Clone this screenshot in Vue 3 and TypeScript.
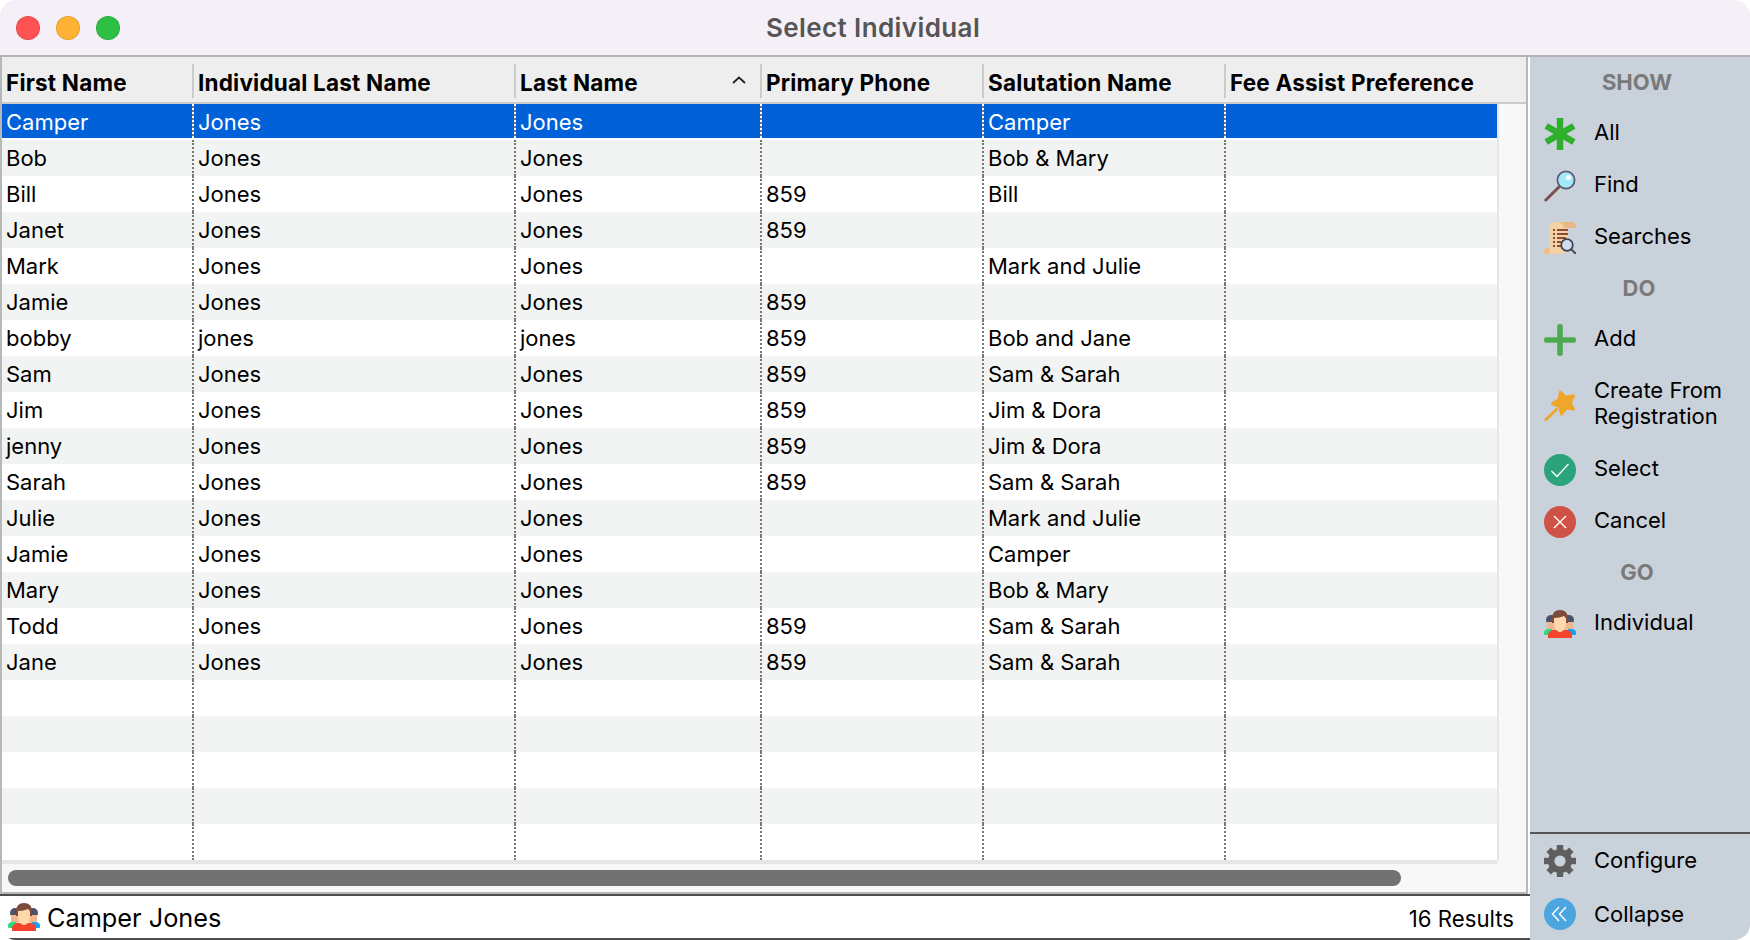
<template>
  <div class="window">
    <!-- icon sprite -->
    <svg class="sprite" aria-hidden="true">
      <symbol id="i-all" viewBox="0 0 32 32">
        <g fill="#2fb02c">
          <rect x="12.8" y="0" width="6.4" height="32" />
          <rect x="12.8" y="0" width="6.4" height="32" transform="rotate(60 16 16)" />
          <rect x="12.8" y="0" width="6.4" height="32" transform="rotate(120 16 16)" />
        </g>
      </symbol>
      <symbol id="i-find" viewBox="0 0 32 32">
        <line x1="1.8" y1="30" x2="15" y2="17" stroke="#7b4f4c" stroke-width="3" stroke-linecap="round" />
        <circle cx="22" cy="10" r="8.6" fill="#a4e8fb" stroke="#5a5a6c" stroke-width="1.8" />
        <circle cx="24.5" cy="7.5" r="2.6" fill="#f2fcff" />
      </symbol>
      <symbol id="i-searches" viewBox="0 0 32 32">
        <path d="M6 3c0-2 2-3 4-3h18c2 0 4 2 4 6H24v18c0 4-2 8-6 8H2c-1 0-2-1-2-2 0-2 1-4 3-4h3z" fill="#f5d1a6" />
        <path d="M12 0h16c2 0 4 2 4 6H20c0-3-3-6-8-6z" fill="#e9b780" />
        <path d="M0 30c0-2 1-4 3-4h3v2c0 2-1 4-3 4H2c-1 0-2-1-2-2z" fill="#eebd88" />
        <g stroke="#8d4c34" stroke-width="1.8">
          <line x1="9" y1="8" x2="11" y2="8" />
          <line x1="13" y1="8" x2="24" y2="8" />
          <line x1="9" y1="12" x2="11" y2="12" />
          <line x1="13" y1="12" x2="24" y2="12" />
          <line x1="9" y1="16" x2="11" y2="16" />
          <line x1="13" y1="16" x2="22" y2="16" />
          <line x1="9" y1="20" x2="11" y2="20" />
          <line x1="13" y1="20" x2="17" y2="20" />
          <line x1="9" y1="24" x2="11" y2="24" />
          <line x1="13" y1="24" x2="17" y2="24" />
        </g>
        <line x1="27" y1="27" x2="31.5" y2="31.5" stroke="#4a4a55" stroke-width="2" stroke-linecap="round" />
        <circle cx="23" cy="23" r="5.8" fill="#cfdcee" stroke="#3f4450" stroke-width="1.8" />
      </symbol>
      <symbol id="i-add" viewBox="0 0 32 32">
        <g fill="#4caa50">
          <rect x="13.2" y="0" width="5.6" height="32" rx="2.4" />
          <rect x="0" y="13.2" width="32" height="5.6" rx="2.4" />
        </g>
      </symbol>
      <symbol id="i-create" viewBox="0 0 32 32">
        <line x1="2" y1="30.5" x2="12.5" y2="20.5" stroke="#eea72a" stroke-width="3" stroke-linecap="round" />
        <path d="M16.5 3L21 8l8.500-1-3.500 7 3.500 6-7.500-1-4.500 6-2-7.500-7-3 6.500-4z" fill="#eea72a" stroke="#eea72a" stroke-width="3" stroke-linejoin="round" />
      </symbol>
      <symbol id="i-select" viewBox="0 0 32 32">
        <circle cx="16" cy="16" r="16" fill="#2ba37b" />
        <polyline points="7.500,17 13,22.500 24.500,10" fill="none" stroke="#fff" stroke-width="1.300" />
      </symbol>
      <symbol id="i-cancel" viewBox="0 0 32 32">
        <circle cx="16" cy="16" r="16" fill="#cf5246" />
        <path d="M10 10l12 12M22 10L10 22" fill="none" stroke="#fff" stroke-width="1.400" />
      </symbol>
      <symbol id="i-person" viewBox="0 0 32 28">
        <circle cx="7" cy="10" r="5" fill="#4e5269" />
        <circle cx="25" cy="10" r="5" fill="#4e5269" />
        <path d="M3 12h8v7l-3 4H3z" fill="#f2b78e" />
        <path d="M21 12h8v6l-2 5h-6z" fill="#f2b78e" />
        <path d="M0 23c0-3 2-4 5-4h3v6H1c-1 0-1-1-1-2z" fill="#2fd882" />
        <path d="M32 23c0-3-2-4-5-4h-3v6h7c1 0 1-1 1-2z" fill="#1d9bf2" />
        <path d="M4 28v-3c0-3 3-5 7-5h10c4 0 7 2 7 5v3z" fill="#f2452b" />
        <path d="M8 9c0-6 3-9 8-9s8 3 8 9v4H8z" fill="#7c4b3c" />
        <path d="M10 8c3 0 8-1 10-2 1 1 2 2 2 3v5c0 4-3 8-6 8s-6-4-6-8z" fill="#fdd8aa" />
      </symbol>
      <symbol id="i-configure" viewBox="0 0 32 32">
        <g fill="#5e5e5e">
          <rect x="12.800" y="0" width="6.400" height="32" />
          <rect x="12.800" y="0" width="6.400" height="32" transform="rotate(45 16 16)" />
          <rect x="12.800" y="0" width="6.400" height="32" transform="rotate(90 16 16)" />
          <rect x="12.800" y="0" width="6.400" height="32" transform="rotate(135 16 16)" />
          <circle cx="16" cy="16" r="12" />
        </g>
        <circle cx="16" cy="16" r="5.600" fill="#c9d1da" />
      </symbol>
      <symbol id="i-collapse" viewBox="0 0 32 32">
        <circle cx="16" cy="16" r="16" fill="#4ba6e0" />
        <path d="M15 9l-6.500 7 6.500 7M22 9l-6.500 7 6.500 7" fill="none" stroke="#fff" stroke-width="1.400" />
      </symbol>
    </svg>

    <div class="titlebar">
      <span class="light red"></span>
      <span class="light amber"></span>
      <span class="light green"></span>
      <span class="title">Select Individual</span>
    </div>

    <div class="content">
      <div class="main">
        <div class="frame">
          <div class="grid-head">
            <div v-for="(col, i) in columns" :key="col" class="head-cell">
              <span class="head-text">{{ col }}</span>
              <svg v-if="i === 2" class="sort" viewBox="0 0 14 8">
                <polyline points="1,7 7,1.500 13,7" fill="none" stroke="#222" stroke-width="1.800" />
              </svg>
            </div>
          </div>
          <div class="grid-wrap">
            <div class="rows">
              <div v-for="(row, r) in rows" :key="r" class="row" :class="{ selected: r === 0 }">
                <div v-for="(val, c) in row" :key="c" class="cell">{{ val }}</div>
              </div>
            </div>
          </div>
          <div class="hscroll">
            <div class="thumb"></div>
          </div>
        </div>
        <div class="footer">
          <svg class="foot-icon"><use href="#i-person" /></svg>
          <span class="foot-name">Camper Jones</span>
          <span class="foot-count">16 Results</span>
        </div>
      </div>

      <div class="side">
        <template v-for="group in groups" :key="group.name">
          <div class="side-head" :class="group.cls">{{ group.name }}</div>
          <div v-for="item in group.items" :key="item.label" class="side-item" :class="{ tall: item.tall }">
            <svg class="side-icon" :class="{ short: item.icon === 'person' }"><use :href="'#i-' + item.icon" /></svg>
            <span class="side-label">{{ item.label }}</span>
          </div>
        </template>
        <div class="side-bottom">
          <div class="side-item bottom-item">
            <svg class="side-icon"><use href="#i-configure" /></svg>
            <span class="side-label">Configure</span>
          </div>
          <div class="side-item bottom-item">
            <svg class="side-icon"><use href="#i-collapse" /></svg>
            <span class="side-label">Collapse</span>
          </div>
        </div>
      </div>
    </div>
  </div>
</template>

<script setup lang="ts">
interface SideItem {
  label: string;
  icon: string;
  tall?: boolean;
}

interface SideGroup {
  name: string;
  cls: string;
  items: SideItem[];
}

const columns: string[] = [
  "First Name",
  "Individual Last Name",
  "Last Name",
  "Primary Phone",
  "Salutation Name",
  "Fee Assist Preference",
];

// first, individual last, last, phone, salutation, fee assist
const people: string[][] = [
  ["Camper", "Jones", "Jones", "", "Camper", ""],
  ["Bob", "Jones", "Jones", "", "Bob & Mary", ""],
  ["Bill", "Jones", "Jones", "859", "Bill", ""],
  ["Janet", "Jones", "Jones", "859", "", ""],
  ["Mark", "Jones", "Jones", "", "Mark and Julie", ""],
  ["Jamie", "Jones", "Jones", "859", "", ""],
  ["bobby", "jones", "jones", "859", "Bob and Jane", ""],
  ["Sam", "Jones", "Jones", "859", "Sam & Sarah", ""],
  ["Jim", "Jones", "Jones", "859", "Jim & Dora", ""],
  ["jenny", "Jones", "Jones", "859", "Jim & Dora", ""],
  ["Sarah", "Jones", "Jones", "859", "Sam & Sarah", ""],
  ["Julie", "Jones", "Jones", "", "Mark and Julie", ""],
  ["Jamie", "Jones", "Jones", "", "Camper", ""],
  ["Mary", "Jones", "Jones", "", "Bob & Mary", ""],
  ["Todd", "Jones", "Jones", "859", "Sam & Sarah", ""],
  ["Jane", "Jones", "Jones", "859", "Sam & Sarah", ""],
];

// the grid always shows 21 rows, the rest stay empty
const rows: string[][] = [
  ...people,
  ...Array.from({ length: 5 }, () => ["", "", "", "", "", ""]),
];

const groups: SideGroup[] = [
  {
    name: "SHOW",
    cls: "",
    items: [
      { label: "All", icon: "all" },
      { label: "Find", icon: "find" },
      { label: "Searches", icon: "searches" },
    ],
  },
  {
    name: "DO",
    cls: "head-do",
    items: [
      { label: "Add", icon: "add" },
      { label: "Create From Registration", icon: "create", tall: true },
      { label: "Select", icon: "select" },
      { label: "Cancel", icon: "cancel" },
    ],
  },
  {
    name: "GO",
    cls: "",
    items: [{ label: "Individual", icon: "person" }],
  },
];
</script>

<style scoped>
.window {
  position: relative;
  width: 1750px;
  height: 940px;
  display: flex;
  flex-direction: column;
  overflow: hidden;
  border-radius: 16px;
  font-family: Inter, "Liberation Sans", sans-serif;
  color: #000;
  background: #fff;
}

.sprite {
  position: absolute;
  width: 0;
  height: 0;
}

.titlebar {
  height: 57px;
  flex: none;
  display: flex;
  align-items: center;
  gap: 16px;
  padding-left: 16px;
  box-sizing: border-box;
  background: #f5f0f7;
  border-bottom: 2px solid #b6b2b8;
}

.light {
  width: 24px;
  height: 24px;
  border-radius: 50%;
  box-sizing: border-box;
  border: 1px solid rgba(0, 0, 0, 0.1);
}

.red {
  background: #ff5252;
}

.amber {
  background: #ffb133;
}

.green {
  background: #2fbf45;
}

.title {
  flex: 1;
  text-align: center;
  padding-right: 140px;
  font-size: 26px;
  font-weight: 600;
  letter-spacing: 0.4px;
  color: #555;
}

.content {
  flex: 1;
  display: flex;
  min-height: 0;
}

.main {
  width: 1530px;
  flex: none;
  display: flex;
  flex-direction: column;
  box-sizing: border-box;
}

.frame {
  height: 837px;
  flex: none;
  margin-right: 2px;
  box-sizing: border-box;
  border-left: 2px solid #b8b8b8;
  border-right: 2px solid #b8b8b8;
  border-bottom: 2px solid #b8b8b8;
  display: flex;
  flex-direction: column;
  background: #f8f8f8;
}

.grid-head {
  height: 47px;
  flex: none;
  display: grid;
  grid-template-columns: 190px 322px 246px 222px 242px 1fr;
  background: #eee;
  border-bottom: 2px solid #ccc;
  box-sizing: border-box;
}

.head-cell {
  height: 34px;
  align-self: end;
  margin-bottom: 4px;
  display: flex;
  align-items: center;
  justify-content: space-between;
  padding: 0 14px 0 4px;
  border-left: 2px solid #ccc;
  font-size: 22.5px;
  font-weight: 700;
  letter-spacing: 0.2px;
  white-space: nowrap;
}

.head-cell:first-child {
  border-left: none;
  padding-left: 4px;
}

.head-text {
  margin-top: 2px;
}

.sort {
  width: 14px;
  height: 8px;
  margin-bottom: 2px;
}

.grid-wrap {
  flex: none;
  display: flex;
  height: 756px;
}

.rows {
  width: 1495px;
  flex: none;
  background: #fff;
  border-right: 2px solid #e6e6e6;
}

.row {
  height: 36px;
  display: grid;
  grid-template-columns: 190px 322px 246px 222px 242px 1fr;
  font-size: 22px;
  box-sizing: border-box;
}

.row:nth-child(even) {
  background: #f2f4f3;
}

.row.selected {
  background: #0061d9;
  background-clip: padding-box;
  border-bottom: 2px solid #fff;
  color: #fff;
}

.cell {
  padding: 1px 0 0 4px;
  line-height: 34px;
  border-left: 2px dotted #777;
  white-space: nowrap;
  overflow: hidden;
}

.cell:first-child {
  padding-left: 4px;
  border-left: none;
}

.row.selected .cell {
  padding-top: 2px;
  line-height: 32px;
  border-left: none;
  padding-left: 6px;
  background: repeating-linear-gradient(to bottom, #fff 0 2px, #777 2px 4px) left / 2px 100% no-repeat;
}

.row.selected .cell:first-child {
  padding-left: 4px;
  background: none;
}

.hscroll {
  flex: 1;
  display: flex;
  align-items: center;
  padding-left: 6px;
  border-top: 4px solid #e6e6e6;
  width: 1495px;
  box-sizing: border-box;
}

.thumb {
  width: 1393px;
  height: 16px;
  border-radius: 8px;
  background: #717171;
}

.footer {
  flex: 1;
  display: flex;
  align-items: center;
  padding: 0 16px 0 8px;
  border-top: 2px solid #4d4d4d;
  border-bottom: 2px solid #4d4d4d;
  box-sizing: border-box;
  background: #fff;
}

.foot-icon {
  width: 32px;
  height: 28px;
  flex: none;
}

.foot-name {
  margin-left: 7px;
  font-size: 25.3px;
}

.foot-count {
  margin-left: auto;
  margin-top: 2px;
  font-size: 22.2px;
}

.side {
  flex: 1;
  display: flex;
  flex-direction: column;
  background: #c9d1da;
}

.side-head {
  height: 50px;
  flex: none;
  display: flex;
  align-items: center;
  justify-content: center;
  padding-right: 6px;
  font-size: 22px;
  font-weight: 700;
  color: #7a7a7a;
}

.side-head.head-do {
  padding-right: 2px;
}

.side-item {
  min-height: 52px;
  display: flex;
  align-items: center;
  gap: 18px;
  padding-left: 14px;
  box-sizing: border-box;
}

.side-item.tall {
  min-height: 78px;
}

.side-icon {
  width: 32px;
  height: 32px;
  flex: none;
  margin-top: 2px;
}

.side-icon.short {
  height: 28px;
}

.side-label {
  padding-bottom: 2px;
  font-size: 22px;
  line-height: 26px;
}

.side-bottom {
  margin-top: auto;
  border-top: 2px solid #555;
}

.bottom-item {
  min-height: 53px;
}

.bottom-item:last-child .side-label {
  padding-bottom: 0;
}

.bottom-item .side-icon {
  margin-top: 0;
}
</style>
